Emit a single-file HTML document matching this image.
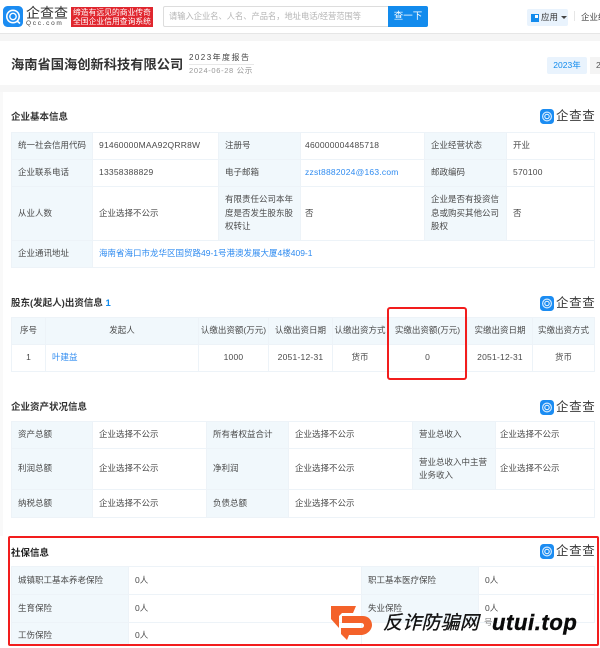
<!DOCTYPE html>
<html lang="zh"><head><meta charset="utf-8"><title>企查查</title>
<style>
html,body{margin:0;padding:0;background:#fff}
#p{position:relative;width:600px;height:648px;overflow:hidden;background:#fff;font-family:"Liberation Sans","Noto Sans CJK SC",sans-serif;font-size:8.5px;color:#4a4a4a}
#p div,#p svg{position:absolute}
#s{position:absolute;left:0;top:0;width:600px;height:648px;filter:blur(.35px)}
.c{box-sizing:border-box;border:1px solid #edf3f8;display:flex;align-items:center;padding-left:6px;line-height:13.5px;color:#4a4a4a;margin:0}
.l{background:#f1f8fc}
.m{justify-content:center;padding-left:0}
.a{color:#2f8bf0}
.t{font-size:9.5px;font-weight:bold;color:#333;left:11px;white-space:nowrap}
.q{left:540px;width:56px;height:16px}
.q b{position:absolute;left:16px;top:0;font-size:12.5px;line-height:16px;font-weight:normal;letter-spacing:.6px;color:#3a3a3a;white-space:nowrap}
.v{letter-spacing:.22px}
</style></head><body>
<div id="p"><div id="s">
<div style="left:0;top:33px;width:600px;height:8px;background:#f5f5f5;border-top:1px solid #e6e6e6;box-sizing:border-box"></div>
<div style="left:0;top:85px;width:600px;height:7px;background:#f6f6f6"></div>
<div style="left:0;top:92px;width:3px;height:444px;background:#f9f9f9"></div>

<svg style="left:3px;top:6px" width="20" height="21" viewBox="0 0 20 21"><rect width="20" height="21" rx="4.5" fill="#1b8cf2"/><circle cx="10" cy="10.5" r="6.2" fill="none" stroke="#fff" stroke-width="1.6"/><circle cx="10" cy="10.5" r="3.2" fill="none" stroke="#fff" stroke-width="1.4"/><path d="M14 15l3 2.5" stroke="#fff" stroke-width="1.6"/></svg>
<div style="left:26px;top:5px;font-size:14px;line-height:16px;color:#333;white-space:nowrap">企查查</div>
<div style="left:26px;top:20px;font-size:6.5px;line-height:8px;color:#444;letter-spacing:1.7px;white-space:nowrap">Qcc.com</div>
<div style="left:71px;top:7px;width:82px;height:20px;background:#e0262e"></div>
<div style="left:73px;top:8px;width:78px;font-size:7.8px;line-height:9.3px;color:#fff;white-space:nowrap;text-align:center">缔造有远见的商业传奇<br>全国企业信用查询系统</div>
<div style="left:163px;top:6px;width:226px;height:21px;box-sizing:border-box;border:1px solid #ddd;border-radius:2px 0 0 2px;background:#fff"></div>
<div style="left:169px;top:10px;font-size:8.25px;line-height:13px;color:#b5b5b5;white-space:nowrap">请输入企业名、人名、产品名，地址电话/经营范围等</div>
<div style="left:388px;top:6px;width:40px;height:21px;background:#128bed;border-radius:0 2px 2px 0;color:#fff;font-size:9.5px;line-height:21px;text-align:center">查一下</div>
<div style="left:527px;top:9px;width:41px;height:17px;background:#e9f3fd;border-radius:2px"></div>
<div style="left:531px;top:14px;width:8px;height:8px;background:#128bed"></div>
<div style="left:535px;top:15px;width:3px;height:3px;background:#fff"></div>
<div style="left:541px;top:10px;font-size:8.5px;line-height:14px;color:#333">应用</div>
<div style="left:561px;top:16px;border:3px solid transparent;border-top-color:#444;border-bottom:0"></div>
<div style="left:574px;top:11px;width:1px;height:10px;background:#e6e6e6"></div>
<div style="left:581px;top:10px;font-size:8.5px;line-height:14px;color:#444;white-space:nowrap">企业级</div>

<div style="left:11px;top:56px;font-size:13.25px;line-height:18px;font-weight:bold;color:#333;white-space:nowrap">海南省国海创新科技有限公司</div>
<div style="left:189px;top:52px;font-size:8px;line-height:11px;letter-spacing:1.45px;color:#444;white-space:nowrap">2023年度报告</div>
<div style="left:189px;top:64px;width:65px;height:1px;background:#e8e8e8"></div>
<div style="left:189px;top:66px;font-size:7.5px;line-height:10px;letter-spacing:.65px;color:#999;white-space:nowrap">2024-06-28 公示</div>
<div style="left:547px;top:57px;width:40px;height:17px;background:#e9f3fd;border-radius:2px;color:#128bed;font-size:8.5px;line-height:17px;text-align:center">2023年</div>
<div style="left:590px;top:57px;width:50px;height:17px;background:#f4f4f4;color:#555;font-size:8.5px;line-height:17px;padding-left:6px;box-sizing:border-box;white-space:nowrap">2022年</div>

<!-- section 1 -->
<div class="t" style="top:109px">企业基本信息</div>
<div class="q" style="top:108px"><svg style="left:0;top:1px" width="14" height="15" viewBox="0 0 14 15"><rect width="14" height="15" rx="3.5" fill="#1b8cf2"/><circle cx="7" cy="7.5" r="4.4" fill="none" stroke="#cfe8ff" stroke-width="1.2"/><circle cx="7" cy="7.5" r="2.2" fill="none" stroke="#fff" stroke-width="1"/></svg><b>企查查</b></div>
<div class="c l" style="left:11px;top:132px;width:82px;height:28px">统一社会信用代码</div>
<div class="c v" style="left:92px;top:132px;width:127px;height:28px">91460000MAA92QRR8W</div>
<div class="c l" style="left:218px;top:132px;width:83px;height:28px">注册号</div>
<div class="c v" style="left:300px;top:132px;width:125px;height:28px;padding-left:4px">460000004485718</div>
<div class="c l" style="left:424px;top:132px;width:83px;height:28px">企业经营状态</div>
<div class="c" style="left:506px;top:132px;width:89px;height:28px">开业</div>
<div class="c l" style="left:11px;top:159px;width:82px;height:28px">企业联系电话</div>
<div class="c v" style="left:92px;top:159px;width:127px;height:28px">13358388829</div>
<div class="c l" style="left:218px;top:159px;width:83px;height:28px">电子邮箱</div>
<div class="c a v" style="left:300px;top:159px;width:125px;height:28px;padding-left:4px">zzst8882024@163.com</div>
<div class="c l" style="left:424px;top:159px;width:83px;height:28px">邮政编码</div>
<div class="c v" style="left:506px;top:159px;width:89px;height:28px">570100</div>
<div class="c l" style="left:11px;top:186px;width:82px;height:55px">从业人数</div>
<div class="c" style="left:92px;top:186px;width:127px;height:55px">企业选择不公示</div>
<div class="c l" style="left:218px;top:186px;width:83px;height:55px">有限责任公司本年度是否发生股东股权转让</div>
<div class="c" style="left:300px;top:186px;width:125px;height:55px;padding-left:4px">否</div>
<div class="c l" style="left:424px;top:186px;width:83px;height:55px">企业是否有投资信息或购买其他公司股权</div>
<div class="c" style="left:506px;top:186px;width:89px;height:55px">否</div>
<div class="c l" style="left:11px;top:240px;width:82px;height:28px">企业通讯地址</div>
<div class="c a" style="left:92px;top:240px;width:503px;height:28px">海南省海口市龙华区国贸路49-1号港澳发展大厦4楼409-1</div>

<!-- section 2 -->
<div class="t" style="top:295px">股东(发起人)出资信息 <span style="color:#128bed">1</span></div>
<div class="q" style="top:295px"><svg style="left:0;top:1px" width="14" height="15" viewBox="0 0 14 15"><rect width="14" height="15" rx="3.5" fill="#1b8cf2"/><circle cx="7" cy="7.5" r="4.4" fill="none" stroke="#cfe8ff" stroke-width="1.2"/><circle cx="7" cy="7.5" r="2.2" fill="none" stroke="#fff" stroke-width="1"/></svg><b>企查查</b></div>
<div class="c l m" style="left:11px;top:317px;width:35px;height:28px">序号</div>
<div class="c l m" style="left:45px;top:317px;width:154px;height:28px">发起人</div>
<div class="c l m" style="left:198px;top:317px;width:71px;height:28px;white-space:nowrap">认缴出资额(万元)</div>
<div class="c l m" style="left:268px;top:317px;width:65px;height:28px;white-space:nowrap">认缴出资日期</div>
<div class="c l m" style="left:332px;top:317px;width:56px;height:28px;white-space:nowrap">认缴出资方式</div>
<div class="c l m" style="left:387px;top:317px;width:81px;height:28px;white-space:nowrap">实缴出资额(万元)</div>
<div class="c l m" style="left:467px;top:317px;width:66px;height:28px;white-space:nowrap">实缴出资日期</div>
<div class="c l m" style="left:532px;top:317px;width:63px;height:28px;white-space:nowrap">实缴出资方式</div>
<div class="c m" style="left:11px;top:344px;width:35px;height:28px">1</div>
<div class="c a" style="left:45px;top:344px;width:154px;height:28px">叶建益</div>
<div class="c m v" style="left:198px;top:344px;width:71px;height:28px">1000</div>
<div class="c m v" style="left:268px;top:344px;width:65px;height:28px">2051-12-31</div>
<div class="c m" style="left:332px;top:344px;width:56px;height:28px">货币</div>
<div class="c m" style="left:387px;top:344px;width:81px;height:28px">0</div>
<div class="c m v" style="left:467px;top:344px;width:66px;height:28px">2051-12-31</div>
<div class="c m" style="left:532px;top:344px;width:63px;height:28px">货币</div>
<div style="left:387px;top:307px;width:80px;height:73px;box-sizing:border-box;border:2px solid #f21d1d;border-radius:3px"></div>

<!-- section 3 -->
<div class="t" style="top:399px">企业资产状况信息</div>
<div class="q" style="top:399px"><svg style="left:0;top:1px" width="14" height="15" viewBox="0 0 14 15"><rect width="14" height="15" rx="3.5" fill="#1b8cf2"/><circle cx="7" cy="7.5" r="4.4" fill="none" stroke="#cfe8ff" stroke-width="1.2"/><circle cx="7" cy="7.5" r="2.2" fill="none" stroke="#fff" stroke-width="1"/></svg><b>企查查</b></div>
<div class="c l" style="left:11px;top:421px;width:82px;height:28px">资产总额</div>
<div class="c" style="left:92px;top:421px;width:115px;height:28px">企业选择不公示</div>
<div class="c l" style="left:206px;top:421px;width:83px;height:28px">所有者权益合计</div>
<div class="c" style="left:288px;top:421px;width:125px;height:28px">企业选择不公示</div>
<div class="c l" style="left:412px;top:421px;width:84px;height:28px">营业总收入</div>
<div class="c" style="left:495px;top:421px;width:100px;height:28px;padding-left:4px">企业选择不公示</div>
<div class="c l" style="left:11px;top:448px;width:82px;height:42px">利润总额</div>
<div class="c" style="left:92px;top:448px;width:115px;height:42px">企业选择不公示</div>
<div class="c l" style="left:206px;top:448px;width:83px;height:42px">净利润</div>
<div class="c" style="left:288px;top:448px;width:125px;height:42px">企业选择不公示</div>
<div class="c l" style="left:412px;top:448px;width:84px;height:42px">营业总收入中主营业务收入</div>
<div class="c" style="left:495px;top:448px;width:100px;height:42px;padding-left:4px">企业选择不公示</div>
<div class="c l" style="left:11px;top:489px;width:82px;height:29px">纳税总额</div>
<div class="c" style="left:92px;top:489px;width:115px;height:29px">企业选择不公示</div>
<div class="c l" style="left:206px;top:489px;width:83px;height:29px">负债总额</div>
<div class="c" style="left:288px;top:489px;width:307px;height:29px">企业选择不公示</div>

<!-- section 4 -->
<div class="t" style="top:545px;color:#222">社保信息</div>
<div class="q" style="top:543px"><svg style="left:0;top:1px" width="14" height="15" viewBox="0 0 14 15"><rect width="14" height="15" rx="3.5" fill="#1b8cf2"/><circle cx="7" cy="7.5" r="4.4" fill="none" stroke="#cfe8ff" stroke-width="1.2"/><circle cx="7" cy="7.5" r="2.2" fill="none" stroke="#fff" stroke-width="1"/></svg><b>企查查</b></div>
<div class="c l" style="left:11px;top:566px;width:118px;height:29px">城镇职工基本养老保险</div>
<div class="c" style="left:128px;top:566px;width:234px;height:29px">0人</div>
<div class="c l" style="left:361px;top:566px;width:118px;height:29px">职工基本医疗保险</div>
<div class="c" style="left:478px;top:566px;width:117px;height:29px">0人</div>
<div class="c l" style="left:11px;top:594px;width:118px;height:29px">生育保险</div>
<div class="c" style="left:128px;top:594px;width:234px;height:29px">0人</div>
<div class="c l" style="left:361px;top:594px;width:118px;height:29px">失业保险</div>
<div class="c" style="left:478px;top:594px;width:117px;height:29px">0人</div>
<div class="c l" style="left:11px;top:622px;width:118px;height:27px">工伤保险</div>
<div class="c" style="left:128px;top:622px;width:234px;height:27px">0人</div>
<div style="left:0;top:646px;width:600px;height:2px;background:#fff"></div>
<div style="left:8px;top:536px;width:591px;height:110px;box-sizing:border-box;border:2px solid #f21d1d;border-radius:2px"></div>

<!-- watermark -->
<div style="left:484px;top:616px;font-size:8.5px;line-height:12px;color:#888">号</div>
<svg style="left:328px;top:604px" width="46" height="40" viewBox="0 0 46 40"><path d="M3 2H28L25 9H14L11 12V24L3 15ZM14 12H35C41 12 44 17 44 21C44 26 39 31 33 31H21L19 36L13 30V24H33C35 24 36 23 36 21.5C36 20 35 19 33 19H14Z" fill="#f4622a"/></svg>
<div style="left:383px;top:611px;font-size:19px;line-height:26px;font-style:italic;color:#111;white-space:nowrap;letter-spacing:.2px;-webkit-text-stroke:.3px #111">反诈防骗网</div>
<div style="left:492px;top:609px;font-family:'Liberation Sans',sans-serif;font-size:22px;line-height:28px;font-weight:bold;font-style:italic;color:#0a0a0a;white-space:nowrap;letter-spacing:.6px;-webkit-text-stroke:.4px #0a0a0a">utui.top</div>
</div></div>
</body></html>
